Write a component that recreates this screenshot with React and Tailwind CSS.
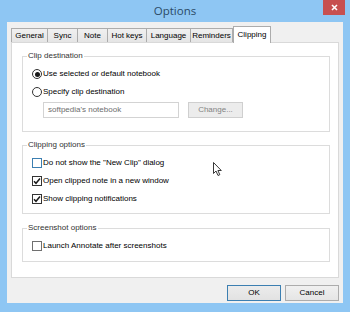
import React from 'react';

const tabs = [
  { label: 'General', w: 'w-[37px]' },
  { label: 'Sync', w: 'w-[31px]' },
  { label: 'Note', w: 'w-[31px]' },
  { label: 'Hot keys', w: 'w-[40px]' },
  { label: 'Language', w: 'w-[45px]' },
  { label: 'Reminders', w: 'w-[43px]' },
];

function Radio({ checked }) {
  return (
    <span className="w-[10px] h-[10px] rounded-full border border-[#333] bg-white flex items-center justify-center shrink-0">
      {checked && <span className="w-[5px] h-[5px] rounded-full bg-[#1a1a1a]" />}
    </span>
  );
}

function Check({ checked, hot }) {
  return (
    <span
      className={`w-[10px] h-[10px] border bg-white flex items-center justify-center shrink-0 ${
        hot ? 'border-[#3c7fb1]' : checked ? 'border-[#333]' : 'border-[#707070]'
      }`}
    >
      {checked && (
        <svg width="8" height="8" viewBox="0 0 8 8">
          <path d="M1 4.2 L3 6.3 L7 1.5" fill="none" stroke="#1a1a1a" strokeWidth="1.5" />
        </svg>
      )}
    </span>
  );
}

function Group({ title, className, children }) {
  return (
    <div className={`relative border border-[#dcdcdc] ${className}`}>
      <span className="absolute -top-[7px] left-[4px] bg-white px-[1px] text-[#333] leading-[12px]">{title}</span>
      {children}
    </div>
  );
}

function Row({ control, label }) {
  return (
    <div className="flex items-center h-[14px] gap-[1px]">
      {control}
      <span className="leading-[12px]">{label}</span>
    </div>
  );
}

export default function App() {
  return (
    <div className="relative w-[350px] h-[312px] bg-[#8ec6f3] flex flex-col overflow-hidden text-[8px] text-black font-['Liberation_Sans',Arial,sans-serif]">
      {/* title bar */}
      <div className="relative h-[22px] flex items-center justify-center">
        <span className="text-[11.5px] text-[#2b4a66] font-['Open_Sans',sans-serif]">Options</span>
        <div className="absolute right-[5px] top-0 w-[22px] h-[15px] bg-[#c75050] flex items-center justify-center">
          <svg width="7" height="7" viewBox="0 0 7 7">
            <path d="M1 1 L6 6 M6 1 L1 6" stroke="#fff" strokeWidth="1.6" />
          </svg>
        </div>
      </div>

      {/* client area */}
      <div className="mx-[7px] h-[281px] bg-[#f0f0f0] flex flex-col">
        <div className="flex items-end h-[20px] pl-[4px]">
          {tabs.map((t) => (
            <div
              key={t.label}
              className={`${t.w} h-[14px] -mr-px border border-b-0 border-[#acacac] bg-gradient-to-b from-[#f0f0f0] to-[#e5e5e5] flex items-center justify-center leading-[12px]`}
            >
              {t.label}
            </div>
          ))}
          <div className="relative z-10 w-[38px] h-[17px] -mb-px ml-px border border-b-0 border-[#acacac] bg-white flex items-start justify-center pt-[2px] leading-[12px]">
            Clipping
          </div>
        </div>

        <div className="ml-[4px] w-[328px] h-[236px] bg-white border border-[#d9d9d9] pl-[10px] pr-[8px] pt-[13px] flex flex-col">
          <Group title="Clip destination" className="h-[76px] pt-[10px] pl-[9px] flex flex-col">
            <Row control={<Radio checked />} label="Use selected or default notebook" />
            <div className="mt-[4px]">
              <Row control={<Radio />} label="Specify clip destination" />
            </div>
            <div className="mt-[3px] ml-[11px] flex gap-[9px]">
              <div className="w-[136px] h-[16px] border border-[#d3d3d3] bg-white flex items-center pl-[4px] text-[#6d6d6d]">
                softpedia's notebook
              </div>
              <div className="w-[55px] h-[16px] border border-[#cfcfcf] bg-[#ececec] flex items-center justify-center text-[#838383]">
                Change...
              </div>
            </div>
          </Group>

          <Group title="Clipping options" className="mt-[13px] h-[69px] pt-[10px] pl-[9px] flex flex-col gap-[4px]">
            <Row control={<Check hot />} label={'Do not show the "New Clip" dialog'} />
            <Row control={<Check checked />} label="Open clipped note in a new window" />
            <Row control={<Check checked />} label="Show clipping notifications" />
          </Group>

          <Group title="Screenshot options" className="mt-[14px] h-[34px] pt-[10px] pl-[9px] flex flex-col">
            <Row control={<Check />} label="Launch Annotate after screenshots" />
          </Group>
        </div>

        <div className="flex justify-end gap-[4px] pr-[4px] mt-[7px]">
          <div className="w-[54px] h-[16px] border border-[#3c7fb1] bg-gradient-to-b from-[#ececec] to-[#e2e2e2] flex items-center justify-center">
            OK
          </div>
          <div className="w-[54px] h-[16px] border border-[#acacac] bg-gradient-to-b from-[#f0f0f0] to-[#e5e5e5] flex items-center justify-center">
            Cancel
          </div>
        </div>
      </div>

      {/* mouse pointer */}
      <svg className="absolute left-[213px] top-[162px]" width="10" height="15" viewBox="0 0 10 15">
        <path d="M0.5 0.5 L0.5 11.5 L3 9 L5 13.5 L6.8 12.7 L4.9 8.5 L8.3 8.5 Z" fill="#fff" stroke="#222" strokeWidth="0.9" />
      </svg>
    </div>
  );
}
